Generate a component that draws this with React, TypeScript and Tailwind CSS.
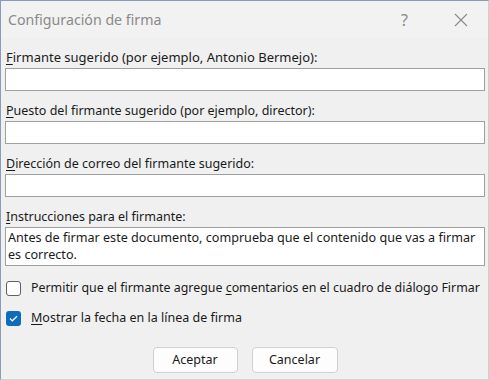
import React from "react";

const U = ({ children }: { children: React.ReactNode }) => (
  <span className="underline underline-offset-2 decoration-1">{children}</span>
);

function Field({ label }: { label: React.ReactNode }) {
  return (
    <div className="flex flex-col">
      <div className="h-[21px] leading-[21px] pl-[1px]">{label}</div>
      <div className="h-[23px] bg-white border border-[#a0a0a0]" />
    </div>
  );
}

export default function App() {
  return (
    <div
      className="w-[489px] h-[380px] bg-[#f0f0f0] border-l border-t border-[#8a9bb5] border-r-[#cfcfcf] border-r border-b border-b-[#d4d4d4] text-[#1a1a1a] text-[12.5px] flex flex-col overflow-hidden"
      style={{ fontFamily: '"Noto Sans", "Segoe UI", sans-serif' }}
    >
      <div className="h-[37px] flex items-center justify-between bg-[#f2f2f2] pl-[7px] pr-[20px]">
        <span className="text-[14.2px] text-[#8a8a8a]">Configuración de firma</span>
        <div className="flex items-center gap-[46px] text-[#8a8a8a]">
          <span className="text-[16px]">?</span>
          <svg width="14" height="14" viewBox="0 0 14 14">
            <path d="M1 1 L13 13 M13 1 L1 13" stroke="#8a8a8a" strokeWidth="1.1" />
          </svg>
        </div>
      </div>
      <div className="flex flex-col px-[4px] pr-[3px] pt-[9px]">
        <div className="flex flex-col gap-[9px]">
          <Field label={<span className="text-[13px]"><U>F</U>irmante sugerido (por ejemplo, Antonio Bermejo):</span>} />
          <Field label={<><U>P</U>uesto del firmante sugerido (por ejemplo, director):</>} />
          <Field label={<><U>D</U>irección de correo del firmante sugerido:</>} />
          <div className="flex flex-col">
            <div className="h-[21px] leading-[21px] pl-[1px]"><U>I</U>nstrucciones para el firmante:</div>
            <div className="h-[39px] bg-white border border-[#a0a0a0] px-[2px] leading-[17px] pt-[1px] text-[12.6px]">
              Antes de firmar este documento, comprueba que el contenido que vas a firmar es correcto.
            </div>
          </div>
        </div>
        <div className="flex items-center mt-[15px] h-[15px]">
          <div className="w-[15px] h-[15px] rounded-[3px] border border-[#5f5f5f] bg-white ml-[1px] shrink-0" />
          <span className="ml-[10px] whitespace-nowrap text-[12.4px]">Permitir que el firmante agregue <U>c</U>omentarios en el cuadro de diálogo Firmar</span>
        </div>
        <div className="flex items-center mt-[15px] h-[15px]">
          <div className="w-[15px] h-[15px] rounded-[3px] bg-[#0f6cbd] ml-[1px] flex items-center justify-center shrink-0">
            <svg width="9" height="7" viewBox="0 0 9 7">
              <path d="M1 3.5 L3.3 5.8 L8 1.2" stroke="white" strokeWidth="1.2" fill="none" />
            </svg>
          </div>
          <span className="ml-[10px]"><U>M</U>ostrar la fecha en la línea de firma</span>
        </div>
        <div className="flex justify-center gap-[14px] mt-[21px]">
          <button className="w-[85px] h-[26px] bg-[#fdfdfd] border border-[#d0d0d0] rounded-[4px]">Aceptar</button>
          <button className="w-[86px] h-[26px] bg-[#fdfdfd] border border-[#d0d0d0] rounded-[4px]">Cancelar</button>
        </div>
      </div>
    </div>
  );
}
